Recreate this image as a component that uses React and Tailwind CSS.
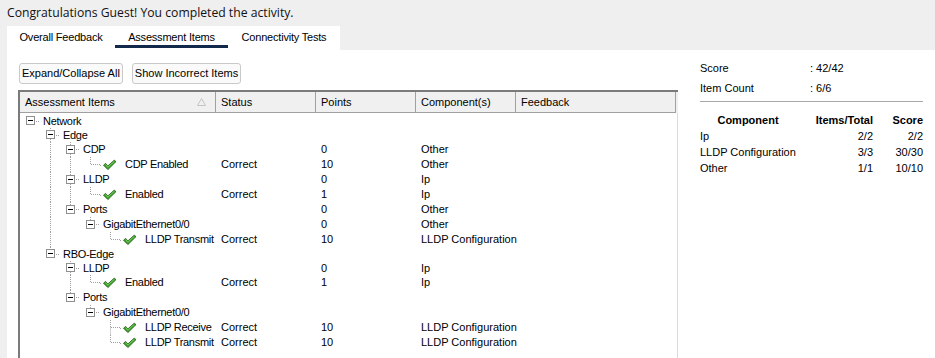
import React from 'react';

const rows = [
  { label: 'Network', level: 0, folder: true, h: 14 },
  { label: 'Edge', level: 1, folder: true, h: 14 },
  { label: 'CDP', level: 2, folder: true, h: 15, points: '0', comp: 'Other' },
  { label: 'CDP Enabled', level: 3, h: 15, status: 'Correct', points: '10', comp: 'Other' },
  { label: 'LLDP', level: 2, folder: true, h: 15, points: '0', comp: 'Ip' },
  { label: 'Enabled', level: 3, h: 15, status: 'Correct', points: '1', comp: 'Ip' },
  { label: 'Ports', level: 2, folder: true, h: 15, points: '0', comp: 'Other' },
  { label: 'GigabitEthernet0/0', level: 3, folder: true, h: 15, points: '0', comp: 'Other' },
  { label: 'LLDP Transmit', level: 4, h: 15, status: 'Correct', points: '10', comp: 'LLDP Configuration' },
  { label: 'RBO-Edge', level: 1, folder: true, h: 14 },
  { label: 'LLDP', level: 2, folder: true, h: 14, points: '0', comp: 'Ip' },
  { label: 'Enabled', level: 3, h: 15, status: 'Correct', points: '1', comp: 'Ip' },
  { label: 'Ports', level: 2, folder: true, h: 15 },
  { label: 'GigabitEthernet0/0', level: 3, folder: true, h: 15 },
  { label: 'LLDP Receive', level: 4, h: 15, status: 'Correct', points: '10', comp: 'LLDP Configuration' },
  { label: 'LLDP Transmit', level: 4, h: 15, status: 'Correct', points: '10', comp: 'LLDP Configuration' },
];

const components = [
  { name: 'Ip', items: '2/2', score: '2/2' },
  { name: 'LLDP Configuration', items: '3/3', score: '30/30' },
  { name: 'Other', items: '1/1', score: '10/10' },
];

// does the node at `level` (row i or its ancestor) have a sibling further down?
function continues(i, level) {
  for (let j = i + 1; j < rows.length; j++) {
    if (rows[j].level < level) return false;
    if (rows[j].level === level) return true;
  }
  return false;
}

const DOT = '#a0a0a0';

function Guide({ row, index, col }) {
  const h = row.h;
  const c = Math.floor(h / 2) + 0.5;
  const own = col === row.level;
  const next = continues(index, col);
  const boxTop = Math.floor((h - 9) / 2);

  if (!own) {
    return (
      <svg width="20" height={h} className="shrink-0 block">
        {next && <line x1="10.5" y1="0" x2="10.5" y2={h} stroke={DOT} strokeDasharray="1 1" />}
      </svg>
    );
  }

  return (
    <svg width="20" height={h} className="shrink-0 block">
      {row.level > 0 && <line x1="10.5" y1="0" x2="10.5" y2={row.folder ? boxTop : c} stroke={DOT} strokeDasharray="1 1" />}
      {next && <line x1="10.5" y1={row.folder ? boxTop + 9 : c} x2="10.5" y2={h} stroke={DOT} strokeDasharray="1 1" />}
      {row.folder ? (
        <>
          <line x1="16" y1={c} x2="20" y2={c} stroke={DOT} strokeDasharray="1 1" />
          <rect x="6.5" y={boxTop + 0.5} width="8" height="8" fill="#fff" stroke="#8f8f8f" />
          <line x1="8" y1={boxTop + 4.5} x2="13" y2={boxTop + 4.5} stroke="#000" />
        </>
      ) : (
        <line x1="11" y1={c} x2="20" y2={c} stroke={DOT} strokeDasharray="1 1" />
      )}
    </svg>
  );
}

function Check() {
  return (
    <svg width="22" height="12" viewBox="0 0 22 12" className="shrink-0 block">
      <line x1="0" y1="6.5" x2="2" y2="6.5" stroke={DOT} strokeDasharray="1 1" />
      <path d="M3.5 6.2 L5.6 4.4 L7.8 7 L14.2 1.2 L16 2.6 L7.9 10.6 Z" fill="#3fa22a" stroke="#17580d" strokeWidth="0.8" strokeLinejoin="round" />
      <path d="M5.6 5.4 L7.8 8 L14.2 2.4" fill="none" stroke="#8fe07a" strokeWidth="0.7" />
    </svg>
  );
}

function TreeRow({ row, index }) {
  const cols = [];
  for (let a = 0; a <= row.level; a++) cols.push(<Guide key={a} row={row} index={index} col={a} />);
  return (
    <div className={`flex items-center ${row.h === 14 ? 'h-[14px]' : 'h-[15px]'}`}>
      <div className="w-[196px] shrink-0 flex items-center overflow-hidden whitespace-nowrap h-full">
        {cols}
        {!row.folder && <Check />}
        <span className="pl-[3px] tracking-[-0.3px]">{row.label}</span>
      </div>
      <div className="w-[100px] shrink-0 pl-[5px]">{row.status}</div>
      <div className="w-[100px] shrink-0 pl-[5px]">{row.points}</div>
      <div className="w-[160px] shrink-0 pl-[5px] whitespace-nowrap">{row.comp}</div>
    </div>
  );
}

export default function App() {
  return (
    <div className="w-[935px] h-[358px] overflow-hidden bg-[#efefef] text-[11px] text-black font-['Liberation_Sans',Arial,sans-serif]">
      <div className="h-[26px] pl-[7px] flex items-center text-[12.2px] font-['Open_Sans',sans-serif] text-[#111] whitespace-nowrap">
        Congratulations Guest! You completed the activity.
      </div>

      <div className="pl-[7px]">
        <div className="flex h-[24px] w-[333px] bg-white whitespace-nowrap">
          <div className="w-[108px] h-[22px] pt-[4px] flex items-center justify-center border-b-[3px] border-transparent tracking-[-0.2px]">Overall Feedback</div>
          <div className="w-[113px] h-[22px] pt-[4px] flex items-center justify-center border-b-[3px] border-[#13294b] tracking-[-0.2px]">Assessment Items</div>
          <div className="w-[112px] h-[22px] pt-[4px] flex items-center justify-center border-b-[3px] border-transparent tracking-[-0.2px]">Connectivity Tests</div>
        </div>

        <div className="bg-white h-[308px] flex">
          <div className="w-[671px] shrink-0 pl-[11px] pt-[13px] flex flex-col">
            <div className="flex gap-[9px] pl-[1px]">
              <button className="h-[21px] px-[2px] rounded-[3px] border border-[#c9c9c9] bg-[#fafafa] leading-none whitespace-nowrap">Expand/Collapse All</button>
              <button className="h-[21px] px-[2px] rounded-[3px] border border-[#c9c9c9] bg-[#fafafa] leading-none whitespace-nowrap">Show Incorrect Items</button>
            </div>

            <div className="mt-[6px] flex-1 border-l-2 border-t-2 border-[#7a7a7a] flex flex-col">
              <div className="flex h-[21px] bg-[#f0f0f0] whitespace-nowrap">
                <div className="w-[196px] shrink-0 pl-[5px] flex items-center justify-between border-r border-b border-[#a0a0a0]">
                  <span>Assessment Items</span>
                  <svg width="9" height="8" viewBox="0 0 9 8" className="mr-[9px]">
                    <path d="M4.5 0.5 L8.5 7.5 L0.5 7.5 Z" fill="none" stroke="#c4c4c4" />
                  </svg>
                </div>
                <div className="w-[100px] shrink-0 pl-[5px] flex items-center border-r border-b border-[#a0a0a0]">Status</div>
                <div className="w-[100px] shrink-0 pl-[5px] flex items-center border-r border-b border-[#a0a0a0]">Points</div>
                <div className="w-[100px] shrink-0 pl-[5px] flex items-center border-r border-b border-[#a0a0a0]">Component(s)</div>
                <div className="w-[160px] shrink-0 pl-[5px] flex items-center border-r border-b border-[#a0a0a0]">Feedback</div>
              </div>
              <div className="flex-1 pt-[1px] border-r border-[#dcdcdc]">
                {rows.map((r, i) => (
                  <TreeRow key={i} row={r} index={i} />
                ))}
              </div>
            </div>
          </div>

          <div className="flex-1 pl-[22px] pr-[12px] pt-[11px]">
            <div className="grid grid-cols-[110px_1fr] gap-y-[6px] leading-[14px]">
              <span>Score</span>
              <span>: 42/42</span>
              <span>Item Count</span>
              <span>: 6/6</span>
            </div>
            <div className="mt-[6px] border-t border-[#a8a8a8]" />
            <div className="mt-[10px] grid grid-cols-[96px_77px_1fr] leading-[16px]">
              <span className="font-bold text-center">Component</span>
              <span className="font-bold text-right">Items/Total</span>
              <span className="font-bold text-right">Score</span>
              {components.map((c) => (
                <React.Fragment key={c.name}>
                  <span className="whitespace-nowrap">{c.name}</span>
                  <span className="text-right">{c.items}</span>
                  <span className="text-right">{c.score}</span>
                </React.Fragment>
              ))}
            </div>
          </div>
        </div>
      </div>
    </div>
  );
}
